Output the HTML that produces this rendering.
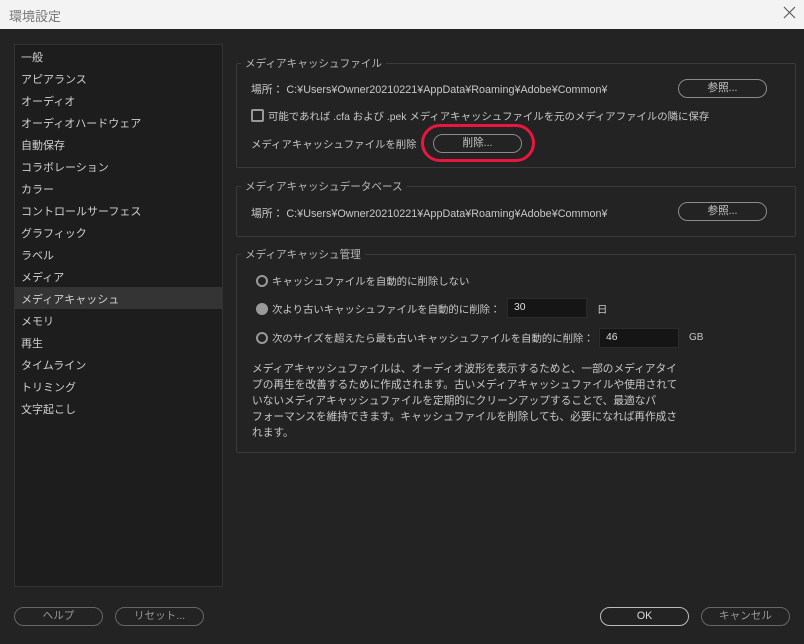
<!DOCTYPE html>
<html><head><meta charset="utf-8"><style>
*{box-sizing:border-box;margin:0;padding:0}
body{width:804px;height:644px;background:#232323;font-family:"Liberation Sans","Noto Sans CJK JP",sans-serif;font-size:10.4px;color:#c8c8c8;position:relative;overflow:hidden}
.a{position:absolute;white-space:nowrap}
.title{left:0;top:0;width:804px;height:29px;background:#f3f3f3;color:#777;font-size:13px;padding:6px 0 0 9px}
.left{left:14px;top:44px;width:209px;height:543px;background:#1d1d1d;border:1px solid #333;font-size:11px}
.item{position:absolute;left:0;width:207px;height:22px;padding:4px 0 0 6px;color:#d0d0d0}
.sel{background:#343434}
.grp{position:absolute;border:1px solid #3a3a3a;border-radius:2px}
.lg{position:absolute;background:#232323;padding:0 4px;color:#b8b8b8;font-size:10.6px}
.btn{position:absolute;height:19px;border:1.5px solid #8a8a8a;border-radius:10px;text-align:center;line-height:17px;color:#c8c8c8;font-size:10.6px}
.radio{position:absolute;width:12px;height:12px;border:2px solid #999;border-radius:50%}
.inp{position:absolute;height:20px;background:#151515;border:1px solid #2c2c2c;padding:3px 0 0 6px;color:#ddd}
.path{font-size:10.8px}
</style></head><body>
<div class="a title">環境設定</div>
<svg class="a" style="left:783px;top:6px" width="13" height="13" viewBox="0 0 13 13"><path d="M1 1L12 12M12 1L1 12" stroke="#555" stroke-width="1.1"/></svg>
<div class="a left">
<div class="item" style="top:0">一般</div>
<div class="item" style="top:22px">アピアランス</div>
<div class="item" style="top:44px">オーディオ</div>
<div class="item" style="top:66px">オーディオハードウェア</div>
<div class="item" style="top:88px">自動保存</div>
<div class="item" style="top:110px">コラボレーション</div>
<div class="item" style="top:132px">カラー</div>
<div class="item" style="top:154px">コントロールサーフェス</div>
<div class="item" style="top:176px">グラフィック</div>
<div class="item" style="top:198px">ラベル</div>
<div class="item" style="top:220px">メディア</div>
<div class="item sel" style="top:242px">メディアキャッシュ</div>
<div class="item" style="top:264px">メモリ</div>
<div class="item" style="top:286px">再生</div>
<div class="item" style="top:308px">タイムライン</div>
<div class="item" style="top:330px">トリミング</div>
<div class="item" style="top:352px">文字起こし</div>
</div>

<div class="grp" style="left:236px;top:63px;width:560px;height:105px"></div>
<div class="lg" style="left:241px;top:56px">メディアキャッシュファイル</div>
<div class="a path" style="left:251px;top:81px">場所：&nbsp;C:¥Users¥Owner20210221¥AppData¥Roaming¥Adobe¥Common¥</div>
<div class="btn" style="left:678px;top:79px;width:89px">参照...</div>
<div class="a" style="left:251px;top:109px;width:13px;height:13px;border:2px solid #999;border-radius:2px"></div>
<div class="a" style="left:268px;top:108px">可能であれば .cfa および .pek メディアキャッシュファイルを元のメディアファイルの隣に保存</div>
<div class="a" style="left:251px;top:136px">メディアキャッシュファイルを削除</div>
<div class="btn" style="left:433px;top:134px;width:89px">削除...</div>
<div class="a" style="left:421px;top:124px;width:114px;height:38px;border:3.5px solid #e8173f;border-radius:19px"></div>

<div class="grp" style="left:236px;top:186px;width:560px;height:51px"></div>
<div class="lg" style="left:241px;top:179px">メディアキャッシュデータベース</div>
<div class="a path" style="left:251px;top:205px">場所：&nbsp;C:¥Users¥Owner20210221¥AppData¥Roaming¥Adobe¥Common¥</div>
<div class="btn" style="left:678px;top:202px;width:89px">参照...</div>

<div class="grp" style="left:236px;top:254px;width:560px;height:199px"></div>
<div class="lg" style="left:241px;top:247px">メディアキャッシュ管理</div>
<div class="radio" style="left:256px;top:275px"></div>
<div class="a" style="left:272px;top:273px">キャッシュファイルを自動的に削除しない</div>
<div class="radio" style="left:256px;top:303px;background:#9a9a9a;border-color:#9a9a9a"></div>
<div class="a" style="left:272px;top:301px">次より古いキャッシュファイルを自動的に削除：</div>
<div class="inp" style="left:507px;top:298px;width:80px">30</div>
<div class="a" style="left:597px;top:301px">日</div>
<div class="radio" style="left:256px;top:332px"></div>
<div class="a" style="left:272px;top:330px">次のサイズを超えたら最も古いキャッシュファイルを自動的に削除：</div>
<div class="inp" style="left:599px;top:328px;width:80px">46</div>
<div class="a" style="left:689px;top:332px;font-size:10px">GB</div>
<div class="a" style="left:252px;top:361px;line-height:16px;font-size:10.7px">メディアキャッシュファイルは、オーディオ波形を表示するためと、一部のメディアタイ<br>プの再生を改善するために作成されます。古いメディアキャッシュファイルや使用されて<br>いないメディアキャッシュファイルを定期的にクリーンアップすることで、最適なパ<br>フォーマンスを維持できます。キャッシュファイルを削除しても、必要になれば再作成さ<br>れます。</div>

<div class="btn" style="left:14px;top:607px;width:89px;color:#999;border-color:#666">ヘルプ</div>
<div class="btn" style="left:115px;top:607px;width:89px;color:#999;border-color:#666">リセット...</div>
<div class="btn" style="left:600px;top:607px;width:89px;border-color:#bbb;color:#ddd">OK</div>
<div class="btn" style="left:701px;top:607px;width:89px;color:#999;border-color:#666">キャンセル</div>
</body></html>
